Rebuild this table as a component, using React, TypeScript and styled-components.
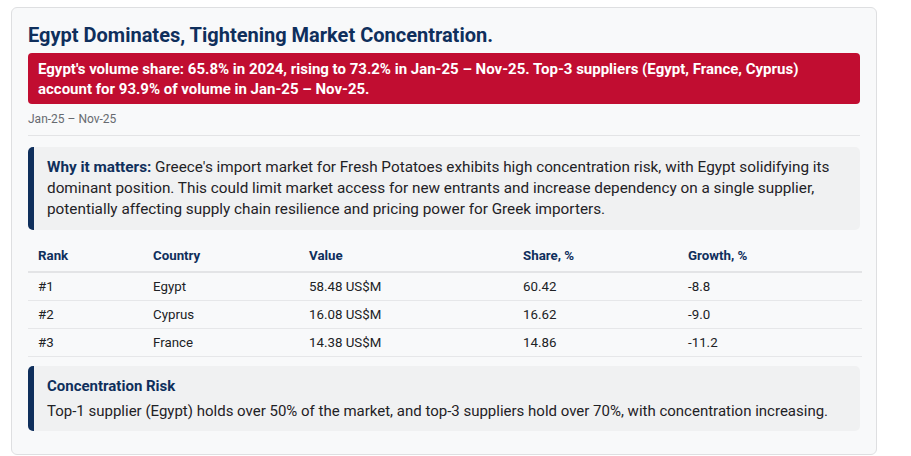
import React from "react";
import styled, { createGlobalStyle } from "styled-components";

const GlobalStyle = createGlobalStyle`
  body {
    margin: 0;
    background: #ffffff;
    font-family: Roboto, "Liberation Sans", Arial, sans-serif;
  }
`;

const navy = "#0f2f5c";

interface Supplier {
  rank: string;
  country: string;
  value: string;
  share: string;
  growth: string;
}

const suppliers: Supplier[] = [
  { rank: "#1", country: "Egypt", value: "58.48 US$M", share: "60.42", growth: "-8.8" },
  { rank: "#2", country: "Cyprus", value: "16.08 US$M", share: "16.62", growth: "-9.0" },
  { rank: "#3", country: "France", value: "14.38 US$M", share: "14.86", growth: "-11.2" },
];

const columns = ["Rank", "Country", "Value", "Share, %", "Growth, %"];
const colWidths = [115, 156, 214, 165, 184];

function App() {
  return (
    <Page>
      <GlobalStyle />
      <Card>
        <Title>Egypt Dominates, Tightening Market Concentration.</Title>
        <Alert>
          Egypt's volume share: 65.8% in 2024, rising to 73.2% in Jan-25 – Nov-25. Top-3 suppliers (Egypt,
          France, Cyprus) account for 93.9% of volume in Jan-25 – Nov-25.
        </Alert>
        <Period>Jan-25 – Nov-25</Period>
        <Callout>
          <p>
            <strong>Why it matters:</strong> Greece's import market for Fresh Potatoes exhibits high concentration
            risk, with Egypt solidifying its dominant position. This could limit market access for new entrants
            and increase dependency on a single supplier, potentially affecting supply chain resilience and
            pricing power for Greek importers.
          </p>
        </Callout>
        <Table>
          <colgroup>
            {colWidths.map((w, i) => (
              <col key={i} style={{ width: w }} />
            ))}
          </colgroup>
          <thead>
            <tr>
              {columns.map((c) => (
                <th key={c}>{c}</th>
              ))}
            </tr>
          </thead>
          <tbody>
            {suppliers.map((s) => (
              <tr key={s.rank}>
                <td>{s.rank}</td>
                <td>{s.country}</td>
                <td>{s.value}</td>
                <td>{s.share}</td>
                <td>{s.growth}</td>
              </tr>
            ))}
          </tbody>
        </Table>
        <Callout $compact>
          <CalloutTitle>Concentration Risk</CalloutTitle>
          <p>
            Top-1 supplier (Egypt) holds over 50% of the market, and top-3 suppliers hold over 70%, with
            concentration increasing.
          </p>
        </Callout>
      </Card>
    </Page>
  );
}

const Page = styled.div`
  padding: 7px 34px 0 11px;
`;

const Card = styled.section`
  box-sizing: border-box;
  width: 866px;
  height: 448px;
  padding: 14px 16px 16px 16px;
  background: #f8f9fa;
  border: 1px solid #dedfe1;
  border-radius: 6px;
  display: flex;
  flex-direction: column;
`;

const Title = styled.h2`
  margin: 0 0 5px 0;
  font-size: 20px;
  line-height: 26px;
  font-weight: 700;
  color: ${navy};
`;

const Alert = styled.div`
  background: #c10d31;
  color: #ffffff;
  font-size: 15px;
  font-weight: 700;
  line-height: 20px;
  padding: 6px 10px 5px 10px;
  border-radius: 4px;
`;

const Period = styled.div`
  font-size: 12px;
  color: #666a70;
  line-height: 16px;
  padding: 7px 0 8px 0;
  border-bottom: 1px solid #e3e4e6;
  margin-bottom: 11px;
`;

const Callout = styled.div<{ $compact?: boolean }>`
  background: #f0f1f2;
  border-left: 6px solid ${navy};
  border-radius: 5px;
  padding: ${({ $compact }) => ($compact ? "9px 14px 9px 13px" : "10px 14px 10px 13px")};
  p {
    margin: 0;
    font-size: ${({ $compact }) => ($compact ? "15px" : "15.3px")};
    line-height: ${({ $compact }) => ($compact ? "22px" : "21px")};
    color: #1f2226;
  }
  strong {
    color: ${navy};
    font-weight: 700;
  }
`;

const CalloutTitle = styled.div`
  font-size: 15px;
  font-weight: 700;
  line-height: 22px;
  color: ${navy};
  margin-bottom: 3px;
`;

const Table = styled.table`
  width: 100%;
  table-layout: fixed;
  border-collapse: collapse;
  margin: 10px 0 9px 0;
  th,
  td {
    text-align: left;
    padding: 0 10px;
    font-size: 13.3px;
    border-bottom: 1px solid #e6e7e9;
  }
  th {
    height: 31px;
    font-weight: 700;
    color: ${navy};
    border-bottom: 2px solid #e3e4e6;
  }
  td {
    height: 27px;
    color: #202225;
  }
`;

export default App;
